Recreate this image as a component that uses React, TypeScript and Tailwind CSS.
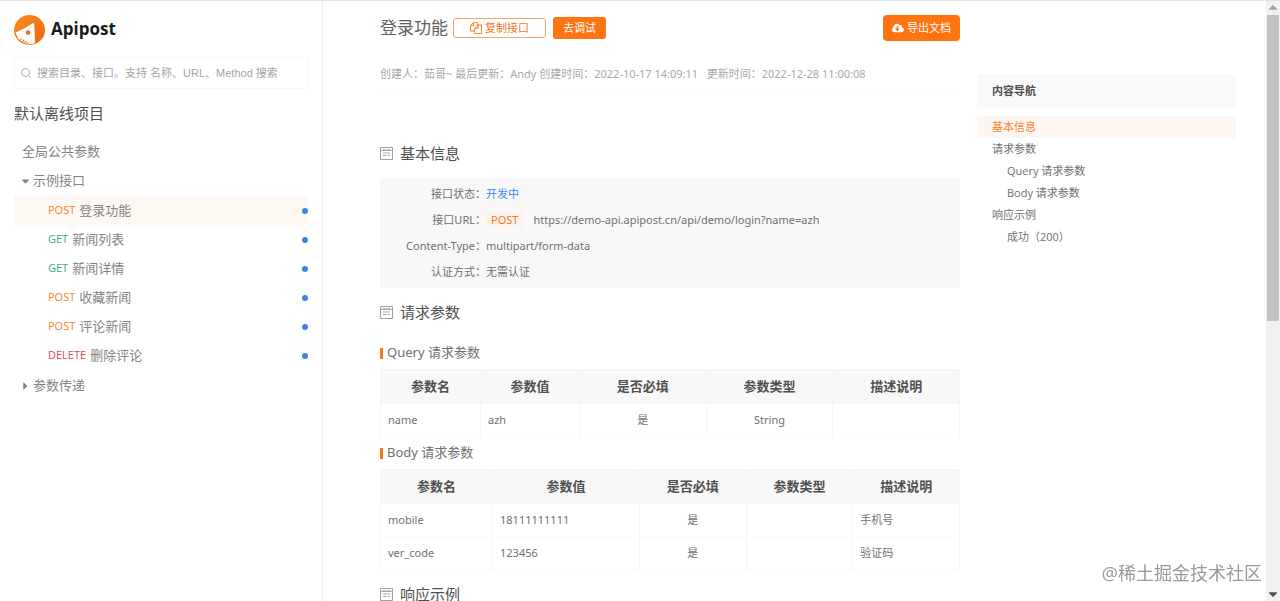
import React from 'react';
import { FaCaretDown, FaCaretRight, FaCloudDownloadAlt } from 'react-icons/fa';
import { FiSearch } from 'react-icons/fi';

type Method = 'POST' | 'GET' | 'DELETE';

interface ApiItem {
  method: Method;
  name: string;
  active?: boolean;
}

interface Column {
  title: string;
  width: string;
  align: string;
}

const methodColors: Record<Method, string> = {
  POST: 'text-[#f7832f]',
  GET: 'text-[#35ab80]',
  DELETE: 'text-[#e0484c]',
};

const apiItems: ApiItem[] = [
  { method: 'POST', name: '登录功能', active: true },
  { method: 'GET', name: '新闻列表' },
  { method: 'GET', name: '新闻详情' },
  { method: 'POST', name: '收藏新闻' },
  { method: 'POST', name: '评论新闻' },
  { method: 'DELETE', name: '删除评论' },
];

const queryColumns: Column[] = [
  { title: '参数名', width: 'w-[100px]', align: 'text-left' },
  { title: '参数值', width: 'w-[99px]', align: 'text-left' },
  { title: '是否必填', width: '', align: 'text-center' },
  { title: '参数类型', width: '', align: 'text-center' },
  { title: '描述说明', width: '', align: 'text-left' },
];

const bodyColumns: Column[] = [
  { title: '参数名', width: 'w-[112px]', align: 'text-left' },
  { title: '参数值', width: 'w-[147px]', align: 'text-left' },
  { title: '是否必填', width: '', align: 'text-center' },
  { title: '参数类型', width: '', align: 'text-center' },
  { title: '描述说明', width: '', align: 'text-left' },
];

const navItems = [
  { label: '基本信息', active: true },
  { label: '请求参数' },
  { label: 'Query 请求参数', nested: true },
  { label: 'Body 请求参数', nested: true },
  { label: '响应示例' },
  { label: '成功（200）', nested: true },
];

const Logo: React.FC = () => (
  <svg className="h-[30px] w-[31px]" viewBox="0 0 31 30" aria-hidden="true">
    <defs>
      <linearGradient id="logo-fill" x1="0" y1="0" x2="1" y2="1">
        <stop offset="0" stopColor="#fb8f20" />
        <stop offset="1" stopColor="#ee6510" />
      </linearGradient>
    </defs>
    <ellipse cx="15.5" cy="15" rx="15.5" ry="15" fill="url(#logo-fill)" />
    <path d="M20.2 8 L21 28 Q18 29.4 14 29.4 L7 26.5 Q3.5 23.5 1.6 17.4 Q11 13.5 18.2 8.4 Z" fill="#fff" />
    <circle cx="14" cy="17.6" r="2.3" fill="#ee6f14" />
    <path
      d="M5 26.3 L7.6 23.8 M7.2 27.8 L10.2 24.6 M9.8 29 L12.4 25.8 M12.6 29.6 L14.2 27.2"
      stroke="#f07a1a"
      strokeWidth="1.1"
    />
  </svg>
);

const CopyIcon: React.FC = () => (
  <svg className="h-3 w-3" viewBox="0 0 1792 1792" fill="currentColor" aria-hidden="true">
    <path d="M1696 384q40 0 68 28t28 68v1216q0 40-28 68t-68 28h-960q-40 0-68-28t-28-68v-288h-544q-40 0-68-28t-28-68v-672q0-40 20-88t48-76l408-408q28-28 76-48t88-20h416q40 0 68 28t28 68v328q68-40 128-40h416zm-544 213l-299 299h299v-299zm-640-384l-299 299h299v-299zm196 647l316-316v-416h-384v416q0 40-28 68t-68 28h-416v640h512v-256q0-40 20-88t48-76zm956 804v-1152h-384v416q0 40-28 68t-68 28h-416v640h896z" />
  </svg>
);

const SectionTitle: React.FC<{ children: React.ReactNode }> = ({ children }) => (
  <h2 className="flex h-6 items-center gap-[7px] text-[15px] text-[#505050]">
    <svg className="h-[13px] w-[13px]" viewBox="0 0 13 13" fill="none" stroke="#a0a0a0" aria-hidden="true">
      <path d="M0.5 0.5 H12.5 V12.5 H0.5 Z" />
      <path d="M3 2.5 H5 M6 2.5 H7 M8 2.5 H10 M0.5 3.5 H12.5 M3 6 H10 M3 8.5 H7 M8 8.5 H10" strokeWidth="0.9" />
    </svg>
    {children}
  </h2>
);

const SubTitle: React.FC<{ children: React.ReactNode }> = ({ children }) => (
  <h3 className="flex h-8 items-center gap-1 text-[13px] text-[#707070]">
    <span className="h-[11px] w-[3px] bg-[#f7761f]" />
    {children}
  </h3>
);

const ParamTable: React.FC<{ columns: Column[]; rows: string[][] }> = ({ columns, rows }) => (
  <table className="w-full table-fixed border-collapse text-[11px] text-[#707070]">
    <thead>
      <tr className="h-[34px] bg-[#f8f8f8] text-[13px] text-[#505050]">
        {columns.map((column) => (
          <th key={column.title} className={`border border-[#f5f5f5] p-0 font-bold ${column.width}`}>
            {column.title}
          </th>
        ))}
      </tr>
    </thead>
    <tbody>
      {rows.map((row) => (
        <tr key={row[0]} className="h-[33px]">
          {row.map((cell, index) => (
            <td
              key={index}
              className={`border-x border-x-[#f5f5f5] border-y border-y-[#fafafa] px-[7px] py-0 ${columns[index].align}`}
            >
              {cell}
            </td>
          ))}
        </tr>
      ))}
    </tbody>
  </table>
);

const InfoRow: React.FC<{ label: string; children: React.ReactNode }> = ({ label, children }) => (
  <div className="flex h-[26px] items-center">
    <dt className="w-[106px] text-right">{label}：</dt>
    <dd className="flex items-center">{children}</dd>
  </div>
);

const Sidebar: React.FC = () => (
  <aside className="w-[323px] shrink-0 border-r border-[#ececec] pt-[14px] pr-[14px] pl-[14px]">
    <div className="flex h-[30px] gap-[6px]">
      <Logo />
      <span className="text-[17px] leading-[27px] font-bold text-[#1a1a1a]">Apipost</span>
    </div>
    <label className="mt-3 flex h-8 items-center gap-[5px] border border-[#f8f8f8] px-[5px] text-[#aaa]">
      <FiSearch className="h-3 w-3 shrink-0" />
      <input
        type="text"
        aria-label="搜索"
        placeholder="搜索目录、接口。支持 名称、URL、Method 搜索"
        className="w-full bg-transparent font-['Liberation_Sans','Noto_Sans_CJK_SC',sans-serif] text-[11px] outline-none placeholder:text-[#a4a4a4]"
      />
    </label>
    <h2 className="mt-3 h-6 text-[15px] leading-6 text-[#505050]">默认离线项目</h2>
    <nav className="mt-3 text-[13px] text-[#848484]">
      <a href="#global" className="flex h-[29px] items-center pl-2">全局公共参数</a>
      <a href="#examples" className="flex h-[29px] items-center gap-[2px] pl-[6px]">
        <FaCaretDown className="h-3 w-[11px]" />
        示例接口
      </a>
      <ul className="my-px">
        {apiItems.map((item) => (
          <li key={item.name}>
            <a
              href="#api"
              className={`flex h-[29px] items-center gap-1 pl-[34px] ${item.active ? 'bg-[#fef8f3]' : ''}`}
            >
              <span className={`text-[11px] ${methodColors[item.method]}`}>{item.method}</span>
              {item.name}
              <span className="ml-auto h-[6px] w-[6px] rounded-full bg-[#3b82ea]" />
            </a>
          </li>
        ))}
      </ul>
      <a href="#passing" className="flex h-[29px] items-center gap-[2px] pl-[6px]">
        <FaCaretRight className="h-3 w-[11px]" />
        参数传递
      </a>
    </nav>
  </aside>
);

const ContentNav: React.FC = () => (
  <nav className="mt-[73px] mr-[30px] ml-[17px] w-[259px] shrink-0 text-[11px] text-[#707070]">
    <h2 className="mb-2 h-[34px] bg-[#f9f9f9] pl-[15px] leading-[34px] font-bold text-[#505050]">内容导航</h2>
    {navItems.map((item) => (
      <a
        key={item.label}
        href="#section"
        className={`block h-[22px] leading-[22px] ${item.nested ? 'pl-[30px]' : 'pl-[15px]'} ${
          item.active ? 'bg-[#fef7f1] text-[#f7832f]' : ''
        }`}
      >
        {item.label}
      </a>
    ))}
  </nav>
);

const Scrollbar: React.FC = () => (
  <div className="flex w-[14px] shrink-0 flex-col items-center bg-[#f1f1f1] text-[#505050]" aria-hidden="true">
    <FaCaretDown className="h-[14px] w-[10px] rotate-180 text-[#a3a3a3]" />
    <div className="h-[306px] w-3 bg-[#c1c1c1]" />
    <FaCaretDown className="mt-auto h-[14px] w-[10px]" />
  </div>
);

export default function App() {
  return (
    <div className="flex h-screen overflow-hidden border-t border-[#e4e4e4] bg-white font-['Open_Sans','Noto_Sans_CJK_SC',sans-serif]">
      <Sidebar />
      <main className="min-w-0 flex-1 pt-[14px] pl-[57px] font-['Noto_Sans','Noto_Sans_CJK_SC',sans-serif]">
        <header className="flex h-[26px] items-center">
          <h1 className="text-[17px] text-[#606060]">登录功能</h1>
          <button className="ml-[5px] flex h-5 w-[93px] items-center justify-center gap-[3px] rounded-[3px] border border-[#f9a066] text-[11px] text-[#f7761f]">
            <CopyIcon />
            复制接口
          </button>
          <button className="ml-[7px] h-[22px] rounded-[3px] bg-[#fd7410] px-[10px] text-[11px] text-white">去调试</button>
          <button className="ml-auto flex h-[26px] items-center gap-[3px] rounded bg-[#fd7410] px-[9px] text-[11px] text-white">
            <FaCloudDownloadAlt className="h-3 w-3" />
            导出文档
          </button>
        </header>
        <p className="mt-6 h-[30px] border-b border-[#fafafa] text-[11px] leading-[18px] whitespace-pre text-[#a8a8a8]">
          {'创建人：茹哥~ 最后更新：Andy 创建时间：2022-10-17 14:09:11   更新时间：2022-12-28 11:00:08'}
        </p>
        <section className="mt-[46px]">
          <SectionTitle>基本信息</SectionTitle>
          <dl className="mt-[13px] bg-[#f8f8f8] py-[3px] text-[11px] text-[#707070]">
            <InfoRow label="接口状态">
              <span className="text-[#3b88f0]">开发中</span>
            </InfoRow>
            <InfoRow label="接口URL">
              <span className="mr-[10px] bg-[#fbf2ec] px-[5px] text-[#f7761f]">POST</span>
              https://demo-api.apipost.cn/api/demo/login?name=azh
            </InfoRow>
            <InfoRow label="Content-Type">multipart/form-data</InfoRow>
            <InfoRow label="认证方式">无需认证</InfoRow>
          </dl>
        </section>
        <section className="mt-3">
          <SectionTitle>请求参数</SectionTitle>
          <div className="mt-[13px]">
            <SubTitle>Query 请求参数</SubTitle>
            <ParamTable columns={queryColumns} rows={[['name', 'azh', '是', 'String', '']]} />
            <SubTitle>Body 请求参数</SubTitle>
            <ParamTable
              columns={bodyColumns}
              rows={[
                ['mobile', '18111111111', '是', '', '手机号'],
                ['ver_code', '123456', '是', '', '验证码'],
              ]}
            />
          </div>
        </section>
        <section className="mt-3">
          <SectionTitle>响应示例</SectionTitle>
        </section>
      </main>
      <ContentNav />
      <Scrollbar />
      <span className="fixed right-[18px] bottom-4 text-lg leading-6 text-[#999]">@稀土掘金技术社区</span>
    </div>
  );
}
